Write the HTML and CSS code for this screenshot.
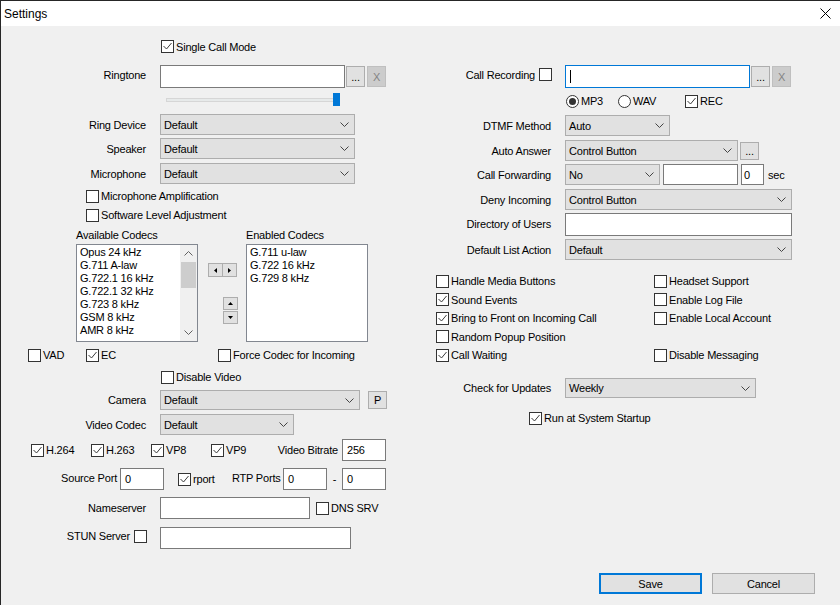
FILE: index.html
```html
<!doctype html>
<html lang="en">
<head>
  <meta charset="utf-8">
  <meta name="viewport" content="width=device-width, initial-scale=1.0" />
  <title>Settings</title>
  <link rel="stylesheet" href="styles.css">
</head>
<body>
<div class="win">
  <div class="titlebar">
    <span class="title">Settings</span>
    <svg class="close" viewBox="0 0 11 11"><path d="M0.5 0.5L10.5 10.5M10.5 0.5L0.5 10.5"/></svg>
  </div>

  <div class="client">
    <!-- left side: audio, codecs, video, network -->
    <div class="col-l">
      <div class="row r-single">
        <span class="cb"><span class="box"><svg viewBox="0 0 11 11"><polyline points="1.5,5 4.5,8 9.5,2"/></svg></span>Single Call Mode</span>
      </div>

      <div class="row r-ring">
        <span class="lbl up">Ringtone</span>
        <span class="edit w185"></span>
        <span class="btn ml1">...</span>
        <span class="btn off ml2">X</span>
      </div>

      <div class="row r-slider">
        <div class="slider"><span class="track"></span><span class="thumb"></span></div>
      </div>

      <div class="row r-dev">
        <span class="lbl">Ring Device</span>
        <span class="combo w195">Default<svg class="chev" viewBox="0 0 9 5"><polyline points="0.5,0.5 4.5,4.5 8.5,0.5"/></svg></span>
      </div>
      <div class="row r-spk">
        <span class="lbl">Speaker</span>
        <span class="combo w195">Default<svg class="chev" viewBox="0 0 9 5"><polyline points="0.5,0.5 4.5,4.5 8.5,0.5"/></svg></span>
      </div>
      <div class="row r-mic">
        <span class="lbl">Microphone</span>
        <span class="combo w195">Default<svg class="chev" viewBox="0 0 9 5"><polyline points="0.5,0.5 4.5,4.5 8.5,0.5"/></svg></span>
      </div>

      <div class="row r-amp">
        <span class="cb"><span class="box"></span>Microphone Amplification</span>
      </div>
      <div class="row r-sla">
        <span class="cb"><span class="box"></span>Software Level Adjustment</span>
      </div>

      <div class="row r-codec-lbl">
        <span class="avail-lbl">Available Codecs</span>
        <span>Enabled Codecs</span>
      </div>
      <div class="row r-lists">
        <div class="list">
          <ul>
            <li>Opus 24 kHz</li>
            <li>G.711 A-law</li>
            <li>G.722.1 16 kHz</li>
            <li>G.722.1 32 kHz</li>
            <li>G.723 8 kHz</li>
            <li>GSM 8 kHz</li>
            <li>AMR 8 kHz</li>
          </ul>
          <div class="sbar">
            <span class="sb-btn"><svg viewBox="0 0 9 5"><polyline points="0.5,4.5 4.5,0.5 8.5,4.5"/></svg></span>
            <span class="sb-thumb"></span>
            <span class="sb-btn sb-down"><svg viewBox="0 0 9 5"><polyline points="0.5,0.5 4.5,4.5 8.5,0.5"/></svg></span>
          </div>
        </div>
        <div class="movers">
          <div class="lr">
            <span class="mbtn"><svg viewBox="0 0 3 5"><polygon points="3,0 0,2.5 3,5"/></svg></span>
            <span class="mbtn"><svg viewBox="0 0 3 5"><polygon points="0,0 3,2.5 0,5"/></svg></span>
          </div>
          <div class="ud">
            <span class="mbtn"><svg class="vtri" viewBox="0 0 5 3"><polygon points="0,3 2.5,0 5,3"/></svg></span>
            <span class="mbtn"><svg class="vtri" viewBox="0 0 5 3"><polygon points="0,0 2.5,3 5,0"/></svg></span>
          </div>
        </div>
        <div class="list list-en">
          <ul>
            <li>G.711 u-law</li>
            <li>G.722 16 kHz</li>
            <li>G.729 8 kHz</li>
          </ul>
        </div>
      </div>

      <div class="row r-vad">
        <span class="cb w58"><span class="box"></span>VAD</span>
        <span class="cb w132"><span class="box"><svg viewBox="0 0 11 11"><polyline points="1.5,5 4.5,8 9.5,2"/></svg></span>EC</span>
        <span class="cb"><span class="box"></span>Force Codec for Incoming</span>
      </div>
      <div class="row r-dvid">
        <span class="cb"><span class="box"></span>Disable Video</span>
      </div>

      <div class="row r-cam">
        <span class="lbl">Camera</span>
        <span class="combo w200">Default<svg class="chev" viewBox="0 0 9 5"><polyline points="0.5,0.5 4.5,4.5 8.5,0.5"/></svg></span>
        <span class="btn btn-p">P</span>
      </div>
      <div class="row r-vcodec">
        <span class="lbl">Video Codec</span>
        <span class="combo w134">Default<svg class="chev" viewBox="0 0 9 5"><polyline points="0.5,0.5 4.5,4.5 8.5,0.5"/></svg></span>
      </div>

      <div class="row r-codecs">
        <span class="cb w60"><span class="box"><svg viewBox="0 0 11 11"><polyline points="1.5,5 4.5,8 9.5,2"/></svg></span>H.264</span>
        <span class="cb w60"><span class="box"><svg viewBox="0 0 11 11"><polyline points="1.5,5 4.5,8 9.5,2"/></svg></span>H.263</span>
        <span class="cb w60"><span class="box"><svg viewBox="0 0 11 11"><polyline points="1.5,5 4.5,8 9.5,2"/></svg></span>VP8</span>
        <span class="cb w60"><span class="box"><svg viewBox="0 0 11 11"><polyline points="1.5,5 4.5,8 9.5,2"/></svg></span>VP9</span>
        <span class="cell w71">Video Bitrate</span>
        <span class="edit sm w44">256</span>
      </div>

      <div class="row r-port">
        <span class="cell w119 up2">Source Port</span>
        <span class="edit sm w44">0</span>
        <span class="cb w54 ml14"><span class="box"><svg viewBox="0 0 11 11"><polyline points="1.5,5 4.5,8 9.5,2"/></svg></span>rport</span>
        <span class="cell w51 up2">RTP Ports</span>
        <span class="edit sm w44">0</span>
        <span class="cell dash">-</span>
        <span class="edit sm w44">0</span>
      </div>

      <div class="row r-ns">
        <span class="lbl">Nameserver</span>
        <span class="edit sm w150"></span>
        <span class="cb ml6"><span class="box"></span>DNS SRV</span>
      </div>
      <div class="row r-stun">
        <span class="lbl boxed up">STUN Server<span class="box ml4"></span></span>
        <span class="edit sm w191"></span>
      </div>
    </div>

    <!-- right side: recording, call handling, general options -->
    <div class="col-r">
      <div class="row r-rec">
        <span class="lbl boxed up">Call Recording<span class="box ml4"></span></span>
        <span class="edit focus w185"><span class="caret"></span></span>
        <span class="btn ml1">...</span>
        <span class="btn off ml2">X</span>
      </div>
      <div class="row r-fmt">
        <span class="cb w52"><span class="radio on"></span>MP3</span>
        <span class="cb w67"><span class="radio"></span>WAV</span>
        <span class="cb"><span class="box"><svg viewBox="0 0 11 11"><polyline points="1.5,5 4.5,8 9.5,2"/></svg></span>REC</span>
      </div>

      <div class="row r-dtmf">
        <span class="lbl">DTMF Method</span>
        <span class="combo w105">Auto<svg class="chev" viewBox="0 0 9 5"><polyline points="0.5,0.5 4.5,4.5 8.5,0.5"/></svg></span>
      </div>
      <div class="row r-aa">
        <span class="lbl">Auto Answer</span>
        <span class="combo w173">Control Button<svg class="chev" viewBox="0 0 9 5"><polyline points="0.5,0.5 4.5,4.5 8.5,0.5"/></svg></span>
        <span class="btn btn-s ml2">...</span>
      </div>
      <div class="row r-fwd">
        <span class="lbl">Call Forwarding</span>
        <span class="combo w95">No<svg class="chev" viewBox="0 0 9 5"><polyline points="0.5,0.5 4.5,4.5 8.5,0.5"/></svg></span>
        <span class="edit xs w75 ml3"></span>
        <span class="edit xs w23 ml3">0</span>
        <span class="sec">sec</span>
      </div>
      <div class="row r-deny">
        <span class="lbl">Deny Incoming</span>
        <span class="combo w227">Control Button<svg class="chev" viewBox="0 0 9 5"><polyline points="0.5,0.5 4.5,4.5 8.5,0.5"/></svg></span>
      </div>
      <div class="row r-dir">
        <span class="lbl up2">Directory of Users</span>
        <span class="edit w227"></span>
      </div>
      <div class="row r-dla">
        <span class="lbl">Default List Action</span>
        <span class="combo w227">Default<svg class="chev" viewBox="0 0 9 5"><polyline points="0.5,0.5 4.5,4.5 8.5,0.5"/></svg></span>
      </div>

      <div class="opts">
        <span class="cb"><span class="box"></span>Handle Media Buttons</span>
        <span class="cb"><span class="box"></span>Headset Support</span>
        <span class="cb"><span class="box"><svg viewBox="0 0 11 11"><polyline points="1.5,5 4.5,8 9.5,2"/></svg></span>Sound Events</span>
        <span class="cb"><span class="box"></span>Enable Log File</span>
        <span class="cb"><span class="box"><svg viewBox="0 0 11 11"><polyline points="1.5,5 4.5,8 9.5,2"/></svg></span>Bring to Front on Incoming Call</span>
        <span class="cb"><span class="box"></span>Enable Local Account</span>
        <span class="cb"><span class="box"></span>Random Popup Position</span>
        <span></span>
        <span class="cb"><span class="box"><svg viewBox="0 0 11 11"><polyline points="1.5,5 4.5,8 9.5,2"/></svg></span>Call Waiting</span>
        <span class="cb"><span class="box"></span>Disable Messaging</span>
      </div>

      <div class="row r-upd">
        <span class="lbl">Check for Updates</span>
        <span class="combo w191">Weekly<svg class="chev" viewBox="0 0 9 5"><polyline points="0.5,0.5 4.5,4.5 8.5,0.5"/></svg></span>
      </div>
      <div class="row r-run">
        <span class="cb"><span class="box"><svg viewBox="0 0 11 11"><polyline points="1.5,5 4.5,8 9.5,2"/></svg></span>Run at System Startup</span>
      </div>

      <div class="row footer">
        <span class="btn push default">Save</span>
        <span class="btn push">Cancel</span>
      </div>
    </div>
  </div>
</div>
</body>
</html>
```

FILE: styles.css
```css
* {
  box-sizing: border-box;
}
body {
  margin: 0;
  background: #262626;
  font-family: "Liberation Sans", Arial, sans-serif;
  font-size: 11px;
  letter-spacing: -0.2px;
  color: #000;
}
.win {
  margin: 1px 0 0 1px;
  width: 839px;
  height: 604px;
  background: #f0f0f0;
  display: flex;
  flex-direction: column;
  overflow: hidden;
}
.titlebar {
  height: 25px;
  flex: none;
  background: #fff;
  display: flex;
  align-items: center;
  justify-content: space-between;
  padding: 0 9px 0 3px;
}
.title {
  font-size: 12px;
  letter-spacing: 0;
}
.close {
  width: 11px;
  height: 11px;
  stroke: #000;
  stroke-width: 1;
}
.client {
  flex: 1;
  display: flex;
}
.col-l {
  width: 405px;
  display: flex;
  flex-direction: column;
}
.col-r {
  flex: 1;
  display: flex;
  flex-direction: column;
}

/* generic pieces */
.row {
  display: flex;
  align-items: center;
  flex: none;
}
.lbl {
  width: 159px;
  flex: none;
  padding-right: 14px;
  display: flex;
  align-items: center;
  justify-content: flex-end;
  white-space: nowrap;
}
.lbl.boxed {
  padding-right: 13px;
}
/* static labels sit a little above the middle of tall edit boxes */
.up {
  padding-bottom: 4px;
}
.up2 {
  padding-bottom: 2px;
}
.cell {
  flex: none;
  text-align: right;
  white-space: nowrap;
}
.cb {
  display: flex;
  align-items: center;
  flex: none;
  white-space: nowrap;
}
.box {
  width: 13px;
  height: 13px;
  flex: none;
  border: 1px solid #333;
  background: #fff;
  margin-right: 2px;
  display: flex;
}
.lbl .box {
  margin-right: 0;
}
.box svg {
  width: 11px;
  height: 11px;
  fill: none;
  stroke: #3c3c3c;
  stroke-width: 1;
}
.radio {
  width: 13px;
  height: 13px;
  flex: none;
  border: 1px solid #333;
  border-radius: 50%;
  background: #fff;
  margin-right: 2px;
  display: flex;
  align-items: center;
  justify-content: center;
}
.radio.on::after {
  content: "";
  width: 7px;
  height: 7px;
  border-radius: 50%;
  background: #333;
}
.edit {
  height: 23px;
  flex: none;
  border: 1px solid #7a7a7a;
  background: #fff;
  padding: 0 4px;
  display: flex;
  align-items: center;
}
.edit.sm {
  height: 22px;
}
.edit.xs {
  height: 21px;
  padding: 0 2px;
}
.edit.focus {
  border-color: #0078d7;
}
.caret {
  width: 1px;
  height: 13px;
  background: #000;
}
.combo {
  height: 21px;
  flex: none;
  border: 1px solid #adadad;
  background: #e1e1e1;
  padding: 0 5px 0 3px;
  display: flex;
  align-items: center;
  justify-content: space-between;
}
.chev {
  width: 9px;
  height: 5px;
  fill: none;
  stroke: #444;
  stroke-width: 1;
}
.btn {
  width: 19px;
  height: 21px;
  flex: none;
  border: 1px solid #adadad;
  background: #e1e1e1;
  display: flex;
  align-items: center;
  justify-content: center;
}
.btn.off {
  background: #cccccc;
  border-color: #bfbfbf;
  color: #838383;
}
.btn-p {
  height: 18px;
  margin-left: 8px;
}
.btn-s {
  height: 18px;
}

/* widths */
.w23 { width: 23px; }
.w44 { width: 44px; }
.w51 { width: 51px; padding-right: 4px; }
.w52 { width: 52px; }
.w54 { width: 54px; }
.w58 { width: 58px; }
.w60 { width: 60px; }
.w67 { width: 67px; }
.w71 { width: 71px; padding-right: 4px; }
.w75 { width: 75px; }
.w95 { width: 95px; }
.w105 { width: 105px; }
.w119 { width: 119px; padding-right: 3px; }
.w132 { width: 132px; }
.w134 { width: 134px; }
.w150 { width: 150px; }
.w173 { width: 173px; }
.w185 { width: 185px; }
.w191 { width: 191px; }
.w195 { width: 195px; }
.w200 { width: 200px; }
.w227 { width: 227px; }
.ml1 { margin-left: 1px; }
.ml2 { margin-left: 2px; }
.ml3 { margin-left: 3px; }
.ml4 { margin-left: 4px; }
.ml6 { margin-left: 6px; }
.ml14 { margin-left: 14px; }
.dash {
  width: 15px;
  text-align: center;
}
.sec {
  margin-left: 4px;
}

/* left column rows */
.r-single { margin-top: 12px; height: 17px; padding-left: 160px; }
.r-ring { margin-top: 10px; height: 23px; }
.r-slider { margin-top: 4px; height: 15px; }
.r-dev { margin-top: 7px; height: 21px; }
.r-spk { margin-top: 3px; height: 21px; }
.r-mic { margin-top: 4px; height: 21px; }
.r-amp { margin-top: 4px; height: 16px; padding-left: 85px; }
.r-sla { margin-top: 3px; height: 16px; padding-left: 85px; }
.r-codec-lbl { margin-top: 5px; height: 14px; padding-left: 75px; }
.r-lists { margin-top: 2px; height: 98px; padding-left: 75px; align-items: flex-start; }
.r-vad { margin-top: 5px; height: 16px; padding-left: 27px; }
.r-dvid { margin-top: 6px; height: 16px; padding-left: 160px; }
.r-cam { margin-top: 5px; height: 20px; }
.r-cam .combo { height: 20px; }
.r-vcodec { margin-top: 4px; height: 21px; }
.r-codecs { margin-top: 4px; height: 22px; padding-left: 30px; }
.r-port { margin-top: 7px; height: 22px; }
.r-ns { margin-top: 7px; height: 22px; }
.r-stun { margin-top: 8px; height: 22px; }

.slider {
  margin-left: 165px;
  width: 174px;
  height: 13px;
  position: relative;
  display: flex;
  align-items: center;
}
.track {
  flex: 1;
  height: 4px;
  background: #e7eaea;
  border: 1px solid #d6d6d6;
}
.thumb {
  position: absolute;
  right: 0;
  top: 0;
  width: 7px;
  height: 13px;
  background: #0078d7;
}

.avail-lbl {
  width: 170px;
}
.list {
  width: 122px;
  height: 98px;
  flex: none;
  border: 1px solid #828790;
  background: #fff;
  display: flex;
  overflow: hidden;
}
.list ul {
  list-style: none;
  margin: 0;
  padding: 1px 0 0 3px;
  flex: 1;
}
.list li {
  height: 13px;
  line-height: 13px;
  white-space: nowrap;
}
.sbar {
  width: 17px;
  background: #f0f0f0;
  display: flex;
  flex-direction: column;
  align-items: center;
}
.sb-btn {
  height: 17px;
  display: flex;
  align-items: center;
  justify-content: center;
}
.sb-btn svg {
  width: 9px;
  height: 5px;
  fill: none;
  stroke: #606060;
}
.sb-thumb {
  width: 15px;
  height: 26px;
  background: #cdcdcd;
}
.sb-down {
  margin-top: auto;
}
.movers {
  width: 48px;
  flex: none;
  padding-left: 10px;
}
.lr {
  display: flex;
  margin-top: 19px;
}
.lr .mbtn + .mbtn {
  margin-left: -1px;
}
.ud {
  display: flex;
  flex-direction: column;
  margin: 20px 0 0 15px;
  gap: 1px;
}
.mbtn {
  width: 15px;
  height: 14px;
  border: 1px solid #adadad;
  background: #e1e1e1;
  display: flex;
  align-items: center;
  justify-content: center;
}
.ud .mbtn {
  height: 13px;
}
.mbtn svg {
  width: 3px;
  height: 5px;
  fill: #000;
}
.mbtn svg.vtri {
  width: 5px;
  height: 3px;
}

/* right column rows */
.r-rec { margin-top: 39px; height: 23px; }
.r-fmt { margin-top: 5px; height: 16px; padding-left: 160px; }
.r-dtmf { margin-top: 6px; height: 21px; }
.r-aa { margin-top: 4px; height: 21px; }
.r-fwd { margin-top: 3px; height: 21px; }
.r-deny { margin-top: 4px; height: 21px; }
.r-dir { margin-top: 3px; height: 23px; }
.r-dla { margin-top: 3px; height: 21px; }
.opts {
  margin-top: 13px;
  padding-left: 30px;
  display: grid;
  grid-template-columns: 218px auto;
  grid-auto-rows: 16px;
  row-gap: 2.5px;
}
.r-upd { margin-top: 15px; height: 20px; }
.r-upd .combo { height: 20px; }
.r-run { margin-top: 12px; height: 16px; padding-left: 123px; }

.footer {
  margin-top: auto;
  margin-bottom: 11px;
  padding-right: 25px;
  justify-content: flex-end;
}
.btn.push {
  width: 103px;
  height: 21px;
}
.btn.push + .btn.push {
  margin-left: 10px;
}
.btn.default {
  border: 2px solid #0078d7;
}
```
